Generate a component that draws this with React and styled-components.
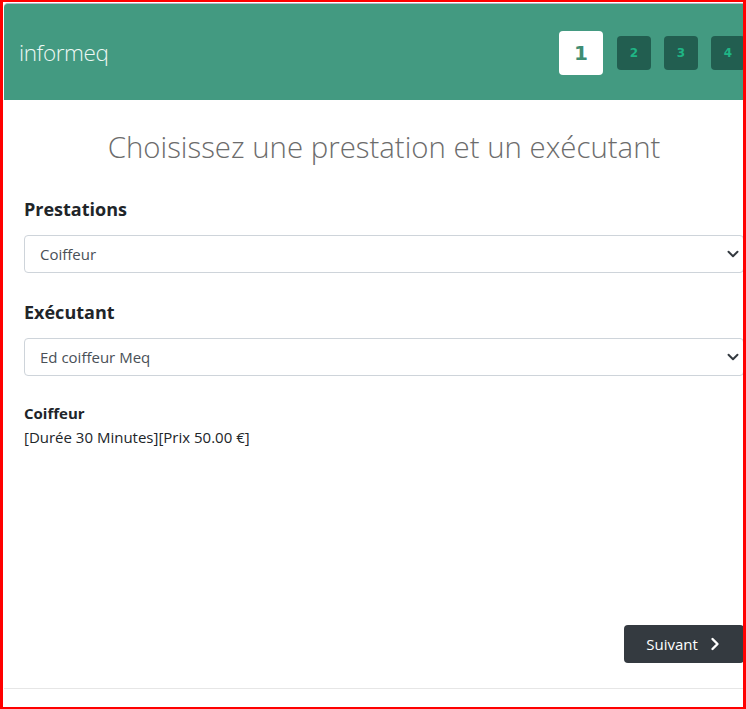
import React from "react";
import styled, { createGlobalStyle } from "styled-components";

const Global = createGlobalStyle`
  html, body { margin: 0; padding: 0; background: #fff; }
  body { font-family: "Open Sans", "Noto Sans", sans-serif; }
  * { box-sizing: border-box; }
`;

const Frame = styled.div`
  width: 746px;
  height: 709px;
  border-style: solid;
  border-color: #ff0000;
  border-width: 2px 3px 2px 3px;
  overflow: hidden;
  background: #fff;
`;

const Page = styled.div`
  width: 760px;
  margin-left: 1px;
  padding-top: 1px;
  display: flex;
  flex-direction: column;
  height: 100%;
`;

const Header = styled.header`
  height: 97px;
  background: #439a81;
  border-top: 1px solid #b9b3c9;
  border-top-left-radius: 4px;
  display: flex;
  align-items: center;
  justify-content: space-between;
  padding: 0 19px 0 15px;
`;

const Brand = styled.div`
  color: #eef8f4;
  font-size: 22.5px;
  font-weight: 300;
  letter-spacing: -0.4px;
  margin-top: 1px;
`;

const Steps = styled.div`
  display: flex;
  align-items: center;
  gap: 13px;
  margin-top: 1px;
`;

const Step = styled.div`
  width: ${(p) => (p.$active ? 44 : 34)}px;
  height: ${(p) => (p.$active ? 44 : 34)}px;
  margin-right: ${(p) => (p.$active ? 1 : 0)}px;
  border-radius: 4px;
  background: ${(p) => (p.$active ? "#ffffff" : "#225e50")};
  color: ${(p) => (p.$active ? "#3f8d73" : "#1fb585")};
  font-family: "DejaVu Sans", sans-serif;
  font-weight: bold;
  font-size: ${(p) => (p.$active ? 20 : 12)}px;
  display: flex;
  align-items: center;
  justify-content: center;
`;

const Main = styled.main`
  flex: 1;
  padding: 0 20px 0 20px;
  display: flex;
  flex-direction: column;
`;

const Title = styled.h1`
  margin: 27px 0 30px;
  text-align: center;
  font-weight: 300;
  font-size: 29.4px;
  color: #6c6c6c;
  line-height: 40px;
`;

const Label = styled.h2`
  margin: 0 0 14px;
  font-size: 18px;
  font-weight: 700;
  color: #212529;
  line-height: 24px;
`;

const SelectWrap = styled.div`
  position: relative;
  margin-bottom: 27px;
`;

const Select = styled.select`
  appearance: none;
  width: 100%;
  height: 38px;
  border: 1px solid #ced4da;
  border-radius: 4px;
  background: #fff;
  padding: 0 36px 0 15px;
  font-family: "Open Sans", "Noto Sans", sans-serif;
  font-size: 15px;
  color: #495057;
  outline: none;
`;

const Chevron = styled.svg`
  position: absolute;
  right: 4px;
  top: 13px;
  width: 14px;
  height: 12px;
  pointer-events: none;
`;

const Info = styled.div`
  margin-top: -2px;
  font-size: 15px;
  color: #212529;
  line-height: 24px;
`;

const InfoTitle = styled.div`
  font-weight: 700;
`;

const Footer = styled.div`
  margin-top: auto;
  display: flex;
  justify-content: flex-end;
  padding-bottom: 25px;
`;

const NextButton = styled.button`
  width: 120px;
  height: 38px;
  border: none;
  border-radius: 4px;
  background: #343a40;
  color: #fff;
  font-family: "Open Sans", "Noto Sans", sans-serif;
  font-size: 15px;
  display: flex;
  align-items: center;
  justify-content: center;
  gap: 12px;
  padding: 0 2px 0 0;
`;

const Rule = styled.div`
  height: 1px;
  background: #e6e6e6;
  margin-bottom: 18px;
`;

function Dropdown({ value }) {
  return (
    <SelectWrap>
      <Select defaultValue={value}>
        <option>{value}</option>
      </Select>
      <Chevron viewBox="0 0 16 16">
        <path d="M2 5l6 6 6-6" fill="none" stroke="#343a40" strokeWidth="2.6" strokeLinecap="round" strokeLinejoin="round" />
      </Chevron>
    </SelectWrap>
  );
}

export default function App() {
  return (
    <>
      <Global />
      <Frame>
        <Page>
          <Header>
            <Brand>informeq</Brand>
            <Steps>
              <Step $active>1</Step>
              <Step>2</Step>
              <Step>3</Step>
              <Step>4</Step>
            </Steps>
          </Header>
          <Main>
            <Title>Choisissez une prestation et un exécutant</Title>
            <Label>Prestations</Label>
            <Dropdown value="Coiffeur" />
            <Label>Exécutant</Label>
            <Dropdown value="Ed coiffeur Meq" />
            <Info>
              <InfoTitle>Coiffeur</InfoTitle>
              <div>[Durée 30 Minutes][Prix 50.00 €]</div>
            </Info>
            <Footer>
              <NextButton>
                Suivant
                <svg width="10" height="14" viewBox="0 0 10 14">
                  <path d="M2.5 2l5 5-5 5" fill="none" stroke="#fff" strokeWidth="2.4" strokeLinecap="round" strokeLinejoin="round" />
                </svg>
              </NextButton>
            </Footer>
          </Main>
          <Rule />
        </Page>
      </Frame>
    </>
  );
}
